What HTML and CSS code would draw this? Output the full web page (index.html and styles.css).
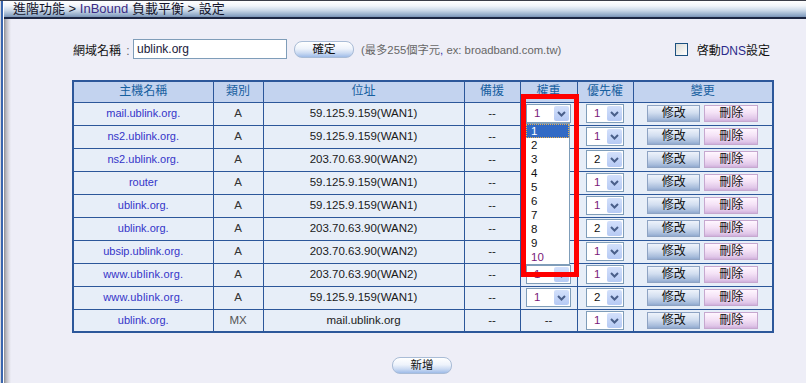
FILE: index.html
```html
<!DOCTYPE html>
<html lang="zh-Hant">
<head>
<meta charset="utf-8">
<title>InBound 負載平衡 設定</title>
<link rel="stylesheet" href="styles.css">
</head>
<body>
<div class="topline"></div>
<div class="titlebar">進階功能 &gt; <span class="inb">InBound</span> 負載平衡 &gt; 設定</div>
<main class="content">
  <div class="domain-row">
    <span class="lbl">網域名稱 <span class="colon">:</span></span>
    <div class="inp">ublink.org</div>
    <button class="pill ok">確定</button>
    <span class="hint">(最多255個字元<span class="cm">,</span> ex: broadband.com.tw)</span>
    <label class="chk"><span class="box"></span><span>啓動<span class="dns">DNS</span>設定</span></label>
  </div>

  <div class="table-wrap">
    <table class="grid">
      <colgroup>
        <col class="c1"><col class="c2"><col class="c3"><col class="c4"><col class="c5"><col class="c6"><col class="c7">
      </colgroup>
      <thead>
        <tr><th>主機名稱</th><th>類別</th><th>位址</th><th>備援</th><th>權重</th><th>優先權</th><th>變更</th></tr>
      </thead>
      <tbody>
        <tr><td class="host">mail.ublink.org.</td><td class="typ">A</td><td class="addr">59.125.9.159(WAN1)</td><td>--</td>
          <td><div class="sel w"><span class="v p">1</span><span class="arr"><svg viewBox="0 0 15 15" width="15" height="15"><path d="M4 6 L7.5 9.5 L11 6" fill="none" stroke="#4a5f8a" stroke-width="2"/></svg></span></div></td>
          <td><div class="sel pr"><span class="v p">1</span><span class="arr"><svg viewBox="0 0 15 15" width="15" height="15"><path d="M4 6 L7.5 9.5 L11 6" fill="none" stroke="#4a5f8a" stroke-width="2"/></svg></span></div></td>
          <td><div class="acts"><button class="b-edit">修改</button><button class="b-del">刪除</button></div></td></tr>
        <tr><td class="host">ns2.ublink.org.</td><td class="typ">A</td><td class="addr">59.125.9.159(WAN1)</td><td>--</td>
          <td></td>
          <td><div class="sel pr"><span class="v p">1</span><span class="arr"><svg viewBox="0 0 15 15" width="15" height="15"><path d="M4 6 L7.5 9.5 L11 6" fill="none" stroke="#4a5f8a" stroke-width="2"/></svg></span></div></td>
          <td><div class="acts"><button class="b-edit">修改</button><button class="b-del">刪除</button></div></td></tr>
        <tr><td class="host">ns2.ublink.org.</td><td class="typ">A</td><td class="addr">203.70.63.90(WAN2)</td><td>--</td>
          <td></td>
          <td><div class="sel pr"><span class="v">2</span><span class="arr"><svg viewBox="0 0 15 15" width="15" height="15"><path d="M4 6 L7.5 9.5 L11 6" fill="none" stroke="#4a5f8a" stroke-width="2"/></svg></span></div></td>
          <td><div class="acts"><button class="b-edit">修改</button><button class="b-del">刪除</button></div></td></tr>
        <tr><td class="host">router</td><td class="typ">A</td><td class="addr">59.125.9.159(WAN1)</td><td>--</td>
          <td></td>
          <td><div class="sel pr"><span class="v p">1</span><span class="arr"><svg viewBox="0 0 15 15" width="15" height="15"><path d="M4 6 L7.5 9.5 L11 6" fill="none" stroke="#4a5f8a" stroke-width="2"/></svg></span></div></td>
          <td><div class="acts"><button class="b-edit">修改</button><button class="b-del">刪除</button></div></td></tr>
        <tr><td class="host">ublink.org.</td><td class="typ">A</td><td class="addr">59.125.9.159(WAN1)</td><td>--</td>
          <td></td>
          <td><div class="sel pr"><span class="v p">1</span><span class="arr"><svg viewBox="0 0 15 15" width="15" height="15"><path d="M4 6 L7.5 9.5 L11 6" fill="none" stroke="#4a5f8a" stroke-width="2"/></svg></span></div></td>
          <td><div class="acts"><button class="b-edit">修改</button><button class="b-del">刪除</button></div></td></tr>
        <tr><td class="host">ublink.org.</td><td class="typ">A</td><td class="addr">203.70.63.90(WAN2)</td><td>--</td>
          <td></td>
          <td><div class="sel pr"><span class="v">2</span><span class="arr"><svg viewBox="0 0 15 15" width="15" height="15"><path d="M4 6 L7.5 9.5 L11 6" fill="none" stroke="#4a5f8a" stroke-width="2"/></svg></span></div></td>
          <td><div class="acts"><button class="b-edit">修改</button><button class="b-del">刪除</button></div></td></tr>
        <tr><td class="host">ubsip.ublink.org.</td><td class="typ">A</td><td class="addr">203.70.63.90(WAN2)</td><td>--</td>
          <td></td>
          <td><div class="sel pr"><span class="v p">1</span><span class="arr"><svg viewBox="0 0 15 15" width="15" height="15"><path d="M4 6 L7.5 9.5 L11 6" fill="none" stroke="#4a5f8a" stroke-width="2"/></svg></span></div></td>
          <td><div class="acts"><button class="b-edit">修改</button><button class="b-del">刪除</button></div></td></tr>
        <tr><td class="host www">www.ublink.org.</td><td class="typ">A</td><td class="addr">203.70.63.90(WAN2)</td><td>--</td>
          <td><div class="sel w under"><span class="v p">1</span><span class="arr"><svg viewBox="0 0 15 15" width="15" height="15"><path d="M4 6 L7.5 9.5 L11 6" fill="none" stroke="#4a5f8a" stroke-width="2"/></svg></span></div></td>
          <td><div class="sel pr"><span class="v p">1</span><span class="arr"><svg viewBox="0 0 15 15" width="15" height="15"><path d="M4 6 L7.5 9.5 L11 6" fill="none" stroke="#4a5f8a" stroke-width="2"/></svg></span></div></td>
          <td><div class="acts"><button class="b-edit">修改</button><button class="b-del">刪除</button></div></td></tr>
        <tr><td class="host www">www.ublink.org.</td><td class="typ">A</td><td class="addr">59.125.9.159(WAN1)</td><td>--</td>
          <td><div class="sel w"><span class="v p">1</span><span class="arr"><svg viewBox="0 0 15 15" width="15" height="15"><path d="M4 6 L7.5 9.5 L11 6" fill="none" stroke="#4a5f8a" stroke-width="2"/></svg></span></div></td>
          <td><div class="sel pr"><span class="v">2</span><span class="arr"><svg viewBox="0 0 15 15" width="15" height="15"><path d="M4 6 L7.5 9.5 L11 6" fill="none" stroke="#4a5f8a" stroke-width="2"/></svg></span></div></td>
          <td><div class="acts"><button class="b-edit">修改</button><button class="b-del">刪除</button></div></td></tr>
        <tr><td class="host">ublink.org.</td><td class="typ mx">MX</td><td class="addr">mail.ublink.org</td><td>--</td><td>--</td>
          <td><div class="sel pr"><span class="v p">1</span><span class="arr"><svg viewBox="0 0 15 15" width="15" height="15"><path d="M4 6 L7.5 9.5 L11 6" fill="none" stroke="#4a5f8a" stroke-width="2"/></svg></span></div></td>
          <td><div class="acts"><button class="b-edit">修改</button><button class="b-del">刪除</button></div></td></tr>
      </tbody>
    </table>

    <ul class="droplist">
      <li class="on">1</li><li>2</li><li>3</li><li>4</li><li>5</li><li>6</li><li>7</li><li>8</li><li>9</li><li class="p">10</li>
    </ul>
    <div class="redbox"></div>
  </div>

  <div class="add-row"><button class="pill add">新增</button></div>
</main>
</body>
</html>
```

FILE: styles.css
```css
* { box-sizing: border-box; }
html, body { margin: 0; padding: 0; }
body {
  width: 806px;
  height: 383px;
  overflow: hidden;
  font-family: "Liberation Sans", "Noto Sans CJK TC", sans-serif;
  font-size: 12px;
  color: #222;
  background:
    linear-gradient(to right, #d9d9dd 0 1px, #3a66ae 1px 3px, #ffffff 3px 4px, #8c8c90 4px, #b8b8be 6px, #dcdce4 9px, #eeeef7 11px) ;
}
.topline { height: 1px; background: #3a3d48; }
.titlebar {
  margin-left: 4px;
  height: 18px;
  padding-left: 9px;
  font-size: 13px;
  line-height: 16px;
  color: #15152a;
  background: linear-gradient(#ffffff 0%, #f1f5fa 30%, #c9d7e7 60%, #8ea7c6 90%, #7a94b6 100%);
  border-bottom: 2px solid #1c2642;
}
.titlebar .inb { color: #3b2c86; }

.content { padding: 20px 0 0 72px; }

.domain-row {
  width: 700px;
  height: 20px;
  display: flex;
  align-items: center;
  padding: 0 2px 0 1px;
}
.lbl { font-size: 12px; color: #111; width: 60px; white-space: nowrap; }
.lbl .colon { color: #666; margin-left: 2px; }
.inp {
  width: 154px;
  height: 20px;
  border: 1px solid #7f9db9;
  background: #fff;
  padding-left: 3px;
  line-height: 18px;
  font-size: 12px;
  color: #1a1a3a;
}
.pill {
  font-family: inherit;
  font-size: 11.5px;
  color: #111;
  width: 60px;
  height: 17px;
  padding: 0;
  line-height: 15px;
  border: 1px solid #a9bcd6;
  border-radius: 8px;
  background: linear-gradient(#ffffff 0%, #eef3fb 45%, #c9d9f2 75%, #9fbce8 100%);
}
.ok { margin-left: 7px; }
.hint { margin-left: 7px; color: #666; font-size: 11.3px; white-space: nowrap; }
.hint .cm { color: #3333aa; }
.chk { margin-left: auto; display: flex; align-items: center; font-size: 12px; color: #111; }
.chk .box {
  width: 13px; height: 13px;
  border: 1px solid #1c5180;
  background: linear-gradient(135deg, #dcdcd6, #ffffff);
  margin-right: 9px;
}
.chk .dns { color: #2a2a8a; }

.table-wrap { position: relative; width: 700px; margin-top: 21px; }
.grid {
  width: 700px;
  border-collapse: collapse;
  table-layout: fixed;
  border: 2px solid #2c579a;
  background: #e7eef8;
}
.c1 { width: 140px; } .c2 { width: 50px; } .c3 { width: 201px; } .c4 { width: 56px; }
.c5 { width: 57px; } .c6 { width: 56px; } .c7 { width: 140px; }
.grid th, .grid td {
  border: 1px solid #2c579a;
  padding: 0;
  text-align: center;
  vertical-align: middle;
  white-space: nowrap;
}
.grid th {
  height: 21px;
  background: #c3d3ef;
  color: #17609f;
  font-weight: normal;
  font-size: 12px;
  line-height: 19px;
}
.grid td { height: 23px; line-height: 21px; font-size: 11.5px; }
.host { color: #3434c8; font-size: 11px !important; }
.host.www { letter-spacing: 0.2px; }
.typ { color: #333; }
.typ.mx { color: #555; }
.addr { color: #1a1a1a; }

.sel {
  display: inline-flex;
  align-items: center;
  height: 19px;
  border: 1px solid #7f9db9;
  background: #fff;
  vertical-align: middle;
}
.sel.w { width: 45px; }
.sel.pr { width: 38px; }
.sel .v { flex: 1; padding-left: 7px; text-align: left; line-height: 17px; font-size: 11.5px; color: #111; }
.sel .v.p { color: #7a1a7a; }
.sel.under .v { line-height: 21px; }
.sel .arr {
  width: 15px; height: 15px;
  margin-right: 1px;
  border-radius: 2px;
  background: linear-gradient(#d3e0fb, #b6caf4);
  display: flex;
}
.sel .arr svg { display: block; }

.acts { display: flex; justify-content: center; gap: 4px; }
.acts button {
  font-family: inherit;
  font-size: 12px;
  color: #111;
  height: 17px;
  padding: 0;
  line-height: 15px;
}
.b-edit {
  width: 53px;
  border: 1px solid #8ea3c3;
  background: linear-gradient(#eef3fb 0%, #d2def0 45%, #a7bcdb 85%, #91a9cf 100%);
}
.b-del {
  width: 54px;
  border: 1px solid #c6a8cf;
  background: linear-gradient(#fff6ff 0%, #f4e2f6 45%, #e0c6e8 85%, #d0b0dc 100%);
}

.droplist {
  position: absolute;
  left: 453px;
  top: 43px;
  width: 45px;
  margin: 0;
  padding: 0;
  list-style: none;
  background: #fff;
  border: 1px solid #7f9db9;
}
.droplist li {
  height: 14px;
  line-height: 14px;
  padding-left: 5px;
  font-size: 11.5px;
  color: #111;
}
.droplist li.on { background: #316ac5; color: #fff; outline: 1px dotted #e8b050; outline-offset: -1px; }
.droplist li.p { color: #7a1a7a; }

.redbox {
  position: absolute;
  left: 449px;
  top: 14px;
  width: 58px;
  height: 183px;
  border: 5px solid #ff0000;
}

.add-row { width: 700px; display: flex; justify-content: center; margin-top: 24px; }
.add { width: 60px; }
```
